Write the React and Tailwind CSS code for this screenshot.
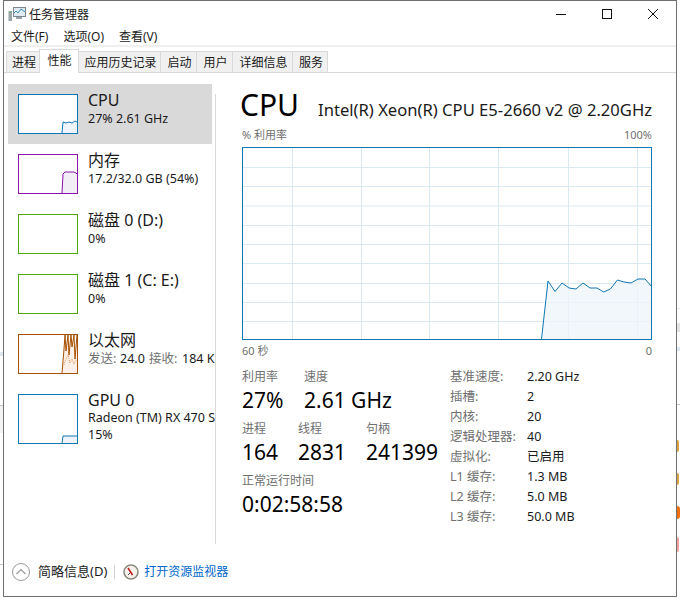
import React from "react";

const sans = "font-['Noto_Sans','Noto_Sans_CJK_SC',sans-serif]";

function Thumb({ color, fill, points, h = 38, children }) {
  return (
    <div className={"w-[60px] shrink-0 border bg-white overflow-hidden " + (h === 48 ? "h-[50px]" : "h-10")} style={{ borderColor: color }}>
      <svg width="58" height={h} viewBox={"0 0 58 " + h} className="block">
        {points && <polyline points={points + " 58," + h + " " + points.split(" ")[0].split(",")[0] + "," + h} fill={fill} stroke="none" />}
        {points && <polyline points={points} fill="none" stroke={color} strokeWidth="1" />}
        {children}
      </svg>
    </div>
  );
}

function SideItem({ active, tall, thumb, title, children }) {
  return (
    <div className={"pl-[10px] pt-[10px] flex items-start gap-[10px] whitespace-nowrap " + (tall ? "h-[70px] " : "h-[60px] ") + (active ? "bg-[#d9d9d9] w-[204px]" : "")}>
      {thumb}
      <div className="flex flex-col text-[#1a1a1a] -mt-[4px]">
        <div className="text-base leading-5">{title}</div>
        {children}
      </div>
    </div>
  );
}

const tabs = [
  ["进程", "w-[34px] border-l"],
  ["性能", "w-[40px]"],
  ["应用历史记录", "w-[82px]"],
  ["启动", "w-[36px]"],
  ["用户", "w-[36px]"],
  ["详细信息", "w-[60px]"],
  ["服务", "w-[35px]"],
];

const chartPts = "298.5,191 305,133 312,143.5 319,135 326,140 333,141 340,135 347,140 354,140 360.7,144 367.4,141 374.4,132 381,134 388,135 395,131 402,131 409,139";

function Stat({ label, value, className }) {
  return (
    <div className={className}>
      <div className="text-xs leading-4 text-[#707070]">{label}</div>
      <div className="text-[21px] leading-[30px] text-black">{value}</div>
    </div>
  );
}

const specs = [
  ["基准速度:", "2.20 GHz"],
  ["插槽:", "2"],
  ["内核:", "20"],
  ["逻辑处理器:", "40"],
  ["虚拟化:", "已启用"],
  ["L1 缓存:", "1.3 MB"],
  ["L2 缓存:", "5.0 MB"],
  ["L3 缓存:", "50.0 MB"],
];

export default function App() {
  return (
    <div className={"relative w-[680px] h-[600px] bg-white overflow-hidden " + sans}>
      <span className="absolute left-[677px] top-[440px] w-[2px] h-[12px] rounded-r-full bg-[#d9a441]" />
      <span className="absolute left-[677px] top-[473px] w-[2px] h-[12px] rounded-r-full bg-[#d9a441]" />
      <span className="absolute left-[677px] top-[506px] w-[3px] h-[13px] rounded-r-full bg-[#f07010]" />
      <span className="absolute left-[677px] top-[537px] w-[2px] h-[15px] rounded-r-full bg-[#f0a0a0]" />
      <span className="absolute left-[677px] top-[308px] w-[3px] h-[1px] bg-[#ececec]" />
      <span className="absolute left-[677px] top-[323px] w-[3px] h-[9px] bg-[#e4e4e4]" />
      <span className="absolute left-[677px] top-[347px] w-[3px] h-[4px] bg-[#dde8f3]" />
      <span className="absolute left-[677px] top-[404px] w-[3px] h-[1px] bg-[#c8c8c8]" />
      <div className="absolute left-0 top-[352px] w-[3px] h-[4px] bg-[#dde8f3]" />
      <div className="absolute left-0 top-[405px] w-[3px] h-[28px] border-t border-[#c8c8c8] bg-[#f3f3f3]" />
      <div className="absolute left-0 top-[564px] w-[3px] h-[1px] bg-[#c8c8c8]" />

      <div className="ml-[3px] w-[674px] h-[597px] border border-[#707070] bg-white flex flex-col text-[#1a1a1a]">
        <div className="h-[29px] shrink-0 flex items-center pl-[4px] pb-[3px]">
          <svg width="18" height="16" viewBox="0 0 18 16" className="shrink-0">
            <rect x="5.5" y="1.5" width="12" height="9" fill="#dfeaf2" stroke="#7a8790" />
            <polyline points="6,7 8,5 10,7 13,3 17,6" fill="none" stroke="#3d8fc0" />
            <rect x="0.5" y="5" width="3.5" height="10" fill="#9aa4ab" />
            <rect x="1" y="6" width="2" height="1" fill="#5fc24f" />
            <rect x="8" y="11" width="6" height="2" fill="#9aa4ab" />
          </svg>
          <span className="ml-[3px] mt-[1px] text-xs">任务管理器</span>
          <div className="ml-auto flex items-center text-[#111]">
            <div className="w-[46px] h-[25px] flex items-center justify-center">
              <svg width="10" height="10" viewBox="0 0 10 10"><path d="M0 5.5H10" stroke="#111" /></svg>
            </div>
            <div className="w-[46px] h-[25px] flex items-center justify-center">
              <svg width="10" height="10" viewBox="0 0 10 10"><rect x="0.5" y="0.5" width="9" height="9" fill="none" stroke="#111" /></svg>
            </div>
            <div className="w-[46px] h-[25px] flex items-center justify-center">
              <svg width="10" height="10" viewBox="0 0 10 10"><path d="M0 0L10 10M10 0L0 10" stroke="#111" strokeWidth="1" /></svg>
            </div>
          </div>
        </div>

        <div className="h-[15px] shrink-0 flex items-center pl-[7px] pb-[1px] gap-[15px] text-xs leading-none">
          <span>文件(F)</span>
          <span>选项(O)</span>
          <span>查看(V)</span>
        </div>

        <div className="h-[28px] shrink-0 border-t-2 border-[#f0f0f0] relative">
          <div className="absolute left-0 right-0 bottom-0 h-[1px] bg-[#d9d9d9]" />
          <div className="relative flex items-end h-full pl-[2px]">
            {tabs.map(([t, w], i) =>
              i === 1 ? (
                <div key={t} className={w + " h-[24px] -ml-[1px] pl-[1px] bg-white border border-b-0 border-[#d9d9d9] text-xs flex items-center justify-center pb-[2px] z-10"}>{t}</div>
              ) : (
                <div key={t} className={w + " h-[22px] pt-[2px] pl-[2px] bg-[#f0f0f0] border-y border-r border-[#d9d9d9] text-xs flex items-center justify-center"}>{t}</div>
              )
            )}
          </div>
        </div>

        <div className="flex-1 flex min-h-0 pt-[11px]">
          <div className="w-[207px] shrink-0 ml-[4px] flex flex-col overflow-hidden">
            <SideItem active title="CPU" thumb={<Thumb color="#1177b4" fill="#eef4fa" points="43,38 44,27 47,28 50,27 53,28 56,26 58,27" />}>
              <div className="text-[12.5px] leading-[18px]">27% 2.61 GHz</div>
            </SideItem>
            <SideItem title="内存" thumb={<Thumb color="#8b12ae" fill="#f2eef5" points="43,38 44,19 46,17 55,17 57,18 58,19" />}>
              <div className="text-[12.5px] leading-[18px]">17.2/32.0 GB (54%)</div>
            </SideItem>
            <SideItem title="磁盘 0 (D:)" thumb={<Thumb color="#4da60c" />}>
              <div className="text-[12.5px] leading-[18px]">0%</div>
            </SideItem>
            <SideItem title="磁盘 1 (C: E:)" thumb={<Thumb color="#4da60c" />}>
              <div className="text-[12.5px] leading-[18px]">0%</div>
            </SideItem>
            <SideItem title="以太网" thumb={
              <Thumb color="#a74f01" fill="#fcf1e8" points="43,38 45,14 46,0 47,16 49,0 50,20 52,0 53,12 55,0 56,24 58,0">
                <polyline points="45,30 47,24 49,20 51,28 53,24 55,29 57,25" fill="none" stroke="#e8935a" strokeDasharray="1 1" />
              </Thumb>
            }>
              <div className="text-[12.5px] leading-[18px] flex">
                <span className="text-[#707070] w-[32px]">发送:</span>
                <span className="w-[29px]">24.0</span>
                <span className="text-[#707070] w-[33px]">接收:</span>
                <span>184 Kbps</span>
              </div>
            </SideItem>
            <SideItem tall title="GPU 0" thumb={<Thumb h={48} color="#1177b4" fill="#eef4fa" points="43,48 44,41 58,41" />}>
              <div className="text-[12.5px] leading-4">Radeon (TM) RX 470 Series</div>
              <div className="text-[12.5px] leading-[18px]">15%</div>
            </SideItem>
          </div>

          <div className="w-[1px] shrink-0 bg-[#d9d9d9] mt-[10px]" />

          <div className="flex-1 min-w-0 pl-[26px] pr-[24px] flex flex-col -mt-[1px] pt-[1px]">
            <div className="flex items-baseline justify-between h-[40px] pt-[1px] shrink-0 -ml-[2px] whitespace-nowrap">
              <span className="text-[30px] leading-[40px] text-black">CPU</span>
              <span className="text-[16.6px] text-[#1a1a1a]">Intel(R) Xeon(R) CPU E5-2660 v2 @ 2.20GHz</span>
            </div>
            <div className="flex justify-between text-[11px] leading-4 text-[#707070] mt-[3px] h-[16px]">
              <span>% 利用率</span>
              <span>100%</span>
            </div>
            <div className="w-[410px] h-[193px] border border-[#1177b4] shrink-0 mt-[4px]">
              <svg width="408" height="191" viewBox="0 0 408 191" className="block">
                {[19, 38, 57.5, 77, 96, 115, 135, 154, 173].map((y) => (
                  <line key={y} x1="0" x2="408" y1={y + 0.5} y2={y + 0.5} stroke="#d9eaf4" />
                ))}
                {[49.5, 118.5, 186.5, 255.5, 325.5, 394.5].map((x) => (
                  <line key={x} x1={x} x2={x} y1="0" y2="191" stroke="#d9eaf4" />
                ))}
                <polygon points={chartPts + " 409,191"} fill="#eef4fa" fillOpacity="0.75" />
                <polyline points={chartPts} fill="none" stroke="#1177b4" strokeWidth="1" />
              </svg>
            </div>
            <div className="flex justify-between text-[11px] leading-4 text-[#707070] mt-[3px] h-[16px]">
              <span>60 秒</span>
              <span>0</span>
            </div>

            <div className="flex mt-[10px]">
              <div className="w-[208px] shrink-0 flex flex-col">
                <div className="flex gap-[20px]">
                  <Stat label="利用率" value="27%" className="w-[42px]" />
                  <Stat label="速度" value="2.61 GHz" />
                </div>
                <div className="flex mt-[6px]">
                  <Stat label="进程" value="164" className="w-[56px]" />
                  <Stat label="线程" value="2831" className="w-[68px]" />
                  <Stat label="句柄" value="241399" />
                </div>
                <Stat label="正常运行时间" value="0:02:58:58" className="mt-[6px]" />
              </div>
              <div className="grid grid-cols-[77px_1fr] auto-rows-[20px] text-[12.5px] items-center -mt-[2px]">
                {specs.map(([k, v]) => (
                  <React.Fragment key={k}>
                    <span className="text-[#707070] whitespace-nowrap">{k}</span>
                    <span className="text-[#1a1a1a]">{v}</span>
                  </React.Fragment>
                ))}
              </div>
            </div>
          </div>
        </div>

        <div className="h-[52px] shrink-0 flex items-center pl-[7px] pt-[4px]">
          <svg width="20" height="20" viewBox="0 0 20 20" className="shrink-0">
            <circle cx="10" cy="10" r="8.5" fill="none" stroke="#9a9a9a" />
            <path d="M5.5 12L10 7.5L14.5 12" fill="none" stroke="#9a9a9a" strokeWidth="1.2" />
          </svg>
          <span className="ml-[7px] text-[13px]">简略信息(D)</span>
          <div className="w-[1px] h-[14px] bg-[#d0d0d0] ml-[7px]" />
          <svg width="16" height="16" viewBox="0 0 16 16" className="ml-[8px] shrink-0">
            <circle cx="8" cy="8" r="7" fill="#f4f2ea" stroke="#8c8c80" strokeWidth="1.6" />
            <path d="M5 4L9.5 11" stroke="#c02020" strokeWidth="1.6" />
            <path d="M5 11L7 9" stroke="#555" />
          </svg>
          <span className="ml-[5px] text-xs text-[#0066cc]">打开资源监视器</span>
        </div>
      </div>
    </div>
  );
}
